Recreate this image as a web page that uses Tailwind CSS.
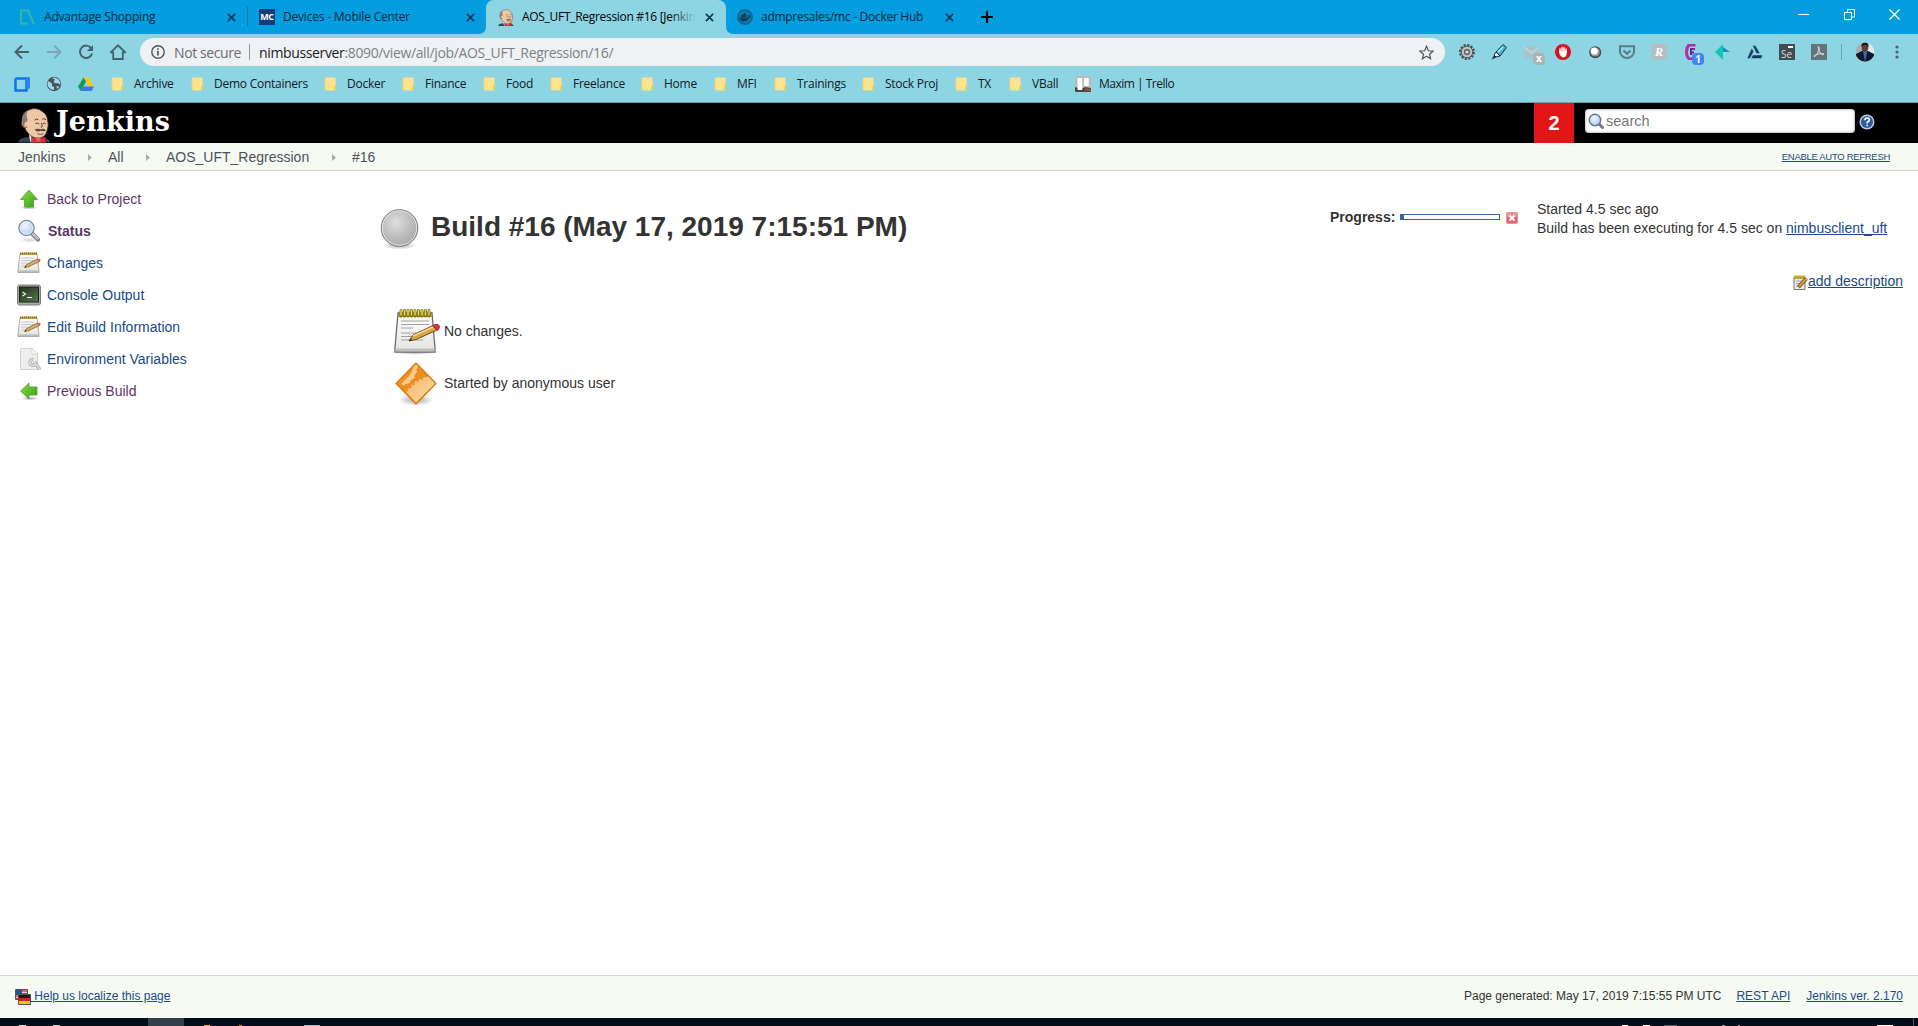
<!DOCTYPE html>
<html lang="en">
<head>
<meta charset="utf-8">
<title>AOS_UFT_Regression #16 [Jenkins]</title>
<script src="https://cdn.jsdelivr.net/npm/@tailwindcss/browser@4"></script>
</head>
<body class="w-[1918px] h-[1026px] overflow-hidden bg-white text-[#333] font-['Liberation_Sans',Arial,sans-serif]">
<svg class="absolute w-0 h-0">
  <defs>
    <linearGradient id="gGreen" x1="0" y1="0" x2="1" y2="1"><stop offset="0" stop-color="#8be04a"/><stop offset="1" stop-color="#3a9c14"/></linearGradient>
    <linearGradient id="gPaper" x1="0" y1="0" x2="0" y2="1"><stop offset="0" stop-color="#fff"/><stop offset="1" stop-color="#e4e4e2"/></linearGradient>
    <linearGradient id="gOrange" x1="0" y1="0" x2="1" y2="1"><stop offset="0" stop-color="#ee9a2c"/><stop offset="1" stop-color="#e8820e"/></linearGradient>
    <linearGradient id="gPeach" x1="0" y1="0" x2="1" y2="1"><stop offset="0" stop-color="#f8b868"/><stop offset="1" stop-color="#fcd9a8"/></linearGradient>
    <linearGradient id="gTerm" x1="0" y1="0" x2="1" y2="1"><stop offset="0" stop-color="#1f2f1c"/><stop offset="1" stop-color="#5a7650"/></linearGradient>
    <radialGradient id="gBall" cx=".4" cy=".35" r=".7"><stop offset="0" stop-color="#dedede"/><stop offset=".6" stop-color="#bcbcbc"/><stop offset="1" stop-color="#a8a8a8"/></radialGradient>
    <radialGradient id="gLens" cx=".4" cy=".35" r=".7"><stop offset="0" stop-color="#f2f8ff"/><stop offset="1" stop-color="#a9c8ee"/></radialGradient>
    <radialGradient id="gShade"><stop offset="0" stop-color="#000" stop-opacity=".35"/><stop offset="1" stop-color="#000" stop-opacity="0"/></radialGradient>
  </defs>
  <symbol id="folder" viewBox="0 0 14 16"><path d="M1 2.5Q1 1 2.500 1H11.500Q12.500 1 12.500 2.500V14Q12.500 15 11.500 15H2.500Q1 15 1 14Z" fill="#fde38c"/><path d="M1 2V14.500H3.500" fill="none" stroke="#e9cf7a"/><path d="M10.500 14.800L11.300 10L12.800 9V14Q12.500 15.300 10.500 14.800Z" fill="#f3c94f"/></symbol>
  <symbol id="close" viewBox="0 0 10 10"><path d="M1 1L9 9M9 1L1 9" stroke="#0c3a56" stroke-width="1.8" fill="none"/></symbol>
  <symbol id="butler" viewBox="0 0 34 36">
    <path d="M0 36Q1 32 7 31L15 30L26 31Q32 32 33 36Z" fill="#344352"/>
    <path d="M11 27L25 28V36H13Z" fill="#f2f2f2"/>
    <path d="M4 14Q4 5 11 2.500Q19 -1 25 4Q30 7 30.500 13Q32 18 30 24Q28 31 22 31.500Q15 32 11 27Q8 24 7 21Q3 20 4 14Z" fill="#eec8a4" stroke="#3a2a22" stroke-width=".8"/>
    <path d="M4 14Q4 6 10 3.500Q8 8 9.500 11Q10.500 14 8 15Q5 16 4.500 18Z" fill="#837e7a"/>
    <path d="M7 15Q5 16 6 20Q8 22 9.500 20" fill="#e3b48d" stroke="#4a352b" stroke-width=".7"/>
    <path d="M17 13Q19 11 21 12.500M25 12Q27 11 29 12.500M18 16.500Q20 15.500 22 17M25.500 16.500Q27 15.500 28.500 17M24 16Q26 20 23.500 20.500" fill="none" stroke="#4a352b" stroke-width="1"/>
    <path d="M17 23Q20 21 23.500 22.500Q27 21 29 23.500Q26 25 23.500 24Q20 26 17 23Z" fill="#59473b"/>
    <path d="M20 27Q23 28.500 26 27" fill="none" stroke="#8a3a30" stroke-width="1"/>
    <path d="M14 30L20 33L28 30L29 36H14Z" fill="#d5343c" stroke="#6d1418" stroke-width=".6"/><circle cx="21" cy="33" r="2.300" fill="#ef5a5c"/>
  </symbol>
  <symbol id="pad" viewBox="0 0 48 48">
    <ellipse cx="23" cy="44" rx="21" ry="3" fill="url(#gShade)"/>
    <path d="M6 5H40L43 40V44H3V40Z" fill="url(#gPaper)" stroke="#6a6a68" stroke-width="1.300"/>
    <path d="M3.500 40.500H42.500V43.500H3.500Z" fill="#bfbfbd"/>
    <path d="M6.500 6H39.500L40 9H6Z" fill="#a59520"/>
    <path d="M9 8V2.500M12.500 8V2.500M16 8V2.500M19.500 8V2.500M23 8V2.500M26.500 8V2.500M30 8V2.500M33.500 8V2.500M37 8V2.500" stroke="#7b6c10" stroke-width="3" stroke-linecap="round"/>
    <path d="M9 7V2.500M12.500 7V2.500M16 7V2.500M19.500 7V2.500M23 7V2.500M26.500 7V2.500M30 7V2.500M33.500 7V2.500M37 7V2.500" stroke="#e7d848" stroke-width="1.500" stroke-linecap="round"/>
    <path d="M9 13H37M9 16.500H37M9 20H21M9 25H30M9 28.500H26M9 32H31" stroke="#a0a0a0" stroke-width="1"/>
    <path d="M17 33L21 27L41 17.500L45 22L24 31.500Z" fill="#d9a548" stroke="#6e4b12" stroke-width="1"/>
    <path d="M21 28L41 19" stroke="#f4d48b" stroke-width="1.500"/>
    <path d="M41 17.500Q46 15 47.300 18Q48 21 45 22.500Z" fill="#df3b3b" stroke="#7c1a1a" stroke-width=".8"/>
    <path d="M17 33L18.500 30.500L20 32Z" fill="#222"/>
  </symbol>
  <symbol id="padsmall" viewBox="0 0 24 24">
    <path d="M3 3H20L22 20V21.500H1V20Z" fill="url(#gPaper)" stroke="#a4a4a0" stroke-width=".9"/>
    <path d="M1.500 20.200H21.500" stroke="#b8b8b4" stroke-width="1.500"/>
    <path d="M3 1.500H20V4H3Z" fill="#c3a94c"/><path d="M3 2.500H20" stroke="#8b7424" stroke-width="2" stroke-dasharray="1 1"/>
    <path d="M4 7H18M4 9.500H17M4 12H11M4 15H8" stroke="#c4c8cc" stroke-width="1"/>
    <path d="M7.500 16.500L9.500 13.500L20.500 8L22.500 10.500L11 16Z" fill="#d8a861" stroke="#7a5424" stroke-width=".7"/>
    <path d="M20 8.300Q22.500 7 23.500 8.500Q24 10 22 10.800Z" fill="#d4615a"/><path d="M7.500 16.500L8.500 15L9.500 16Z" fill="#222"/>
  </symbol>
  <symbol id="lens" viewBox="0 0 24 24">
    <ellipse cx="12" cy="21" rx="10" ry="2.500" fill="url(#gShade)" opacity=".5"/>
    <path d="M14.500 14L21 20.500" stroke="#7e8088" stroke-width="4.200" stroke-linecap="round"/><path d="M15 14.200L21.200 20.200" stroke="#c9c9cc" stroke-width="2"/>
    <circle cx="9.500" cy="9" r="7.600" fill="url(#gLens)" stroke="#7b8aa6" stroke-width="1.300"/><circle cx="9.500" cy="9" r="6.200" fill="none" stroke="#e6effa" stroke-width="1"/>
  </symbol>
</svg>

<div class="flex flex-col w-full h-full">
  <!-- Tab strip -->
  <div class="h-[34px] shrink-0 bg-[#049ddf] flex items-stretch text-[12px] text-[#06263a] font-['Open_Sans',sans-serif] whitespace-nowrap">
    <div class="w-[247px] flex items-center pl-[19px]">
      <svg class="w-[17px] h-[17px]" viewBox="0 0 17 17"><path d="M15 15.500L9 1.500H2V14.500H9" fill="none" stroke="#35b5a4" stroke-width="2"/></svg>
      <span class="ml-2 w-[183px] tracking-[-0.2px]">Advantage Shopping</span>
      <svg class="w-[9px] h-[9px]"><use href="#close"/></svg>
    </div>
    <div class="w-[239px] flex items-center">
      <div class="w-px h-[20px] bg-[#0a6f9f]"></div>
      <div class="ml-[11px] w-4 h-4 bg-[#123f7c] text-white text-[9px] font-bold leading-4 text-center tracking-[-0.4px] font-['Open_Sans',sans-serif]">MC</div>
      <span class="ml-2 w-[183px] tracking-[-0.2px]">Devices - Mobile Center</span>
      <svg class="w-[9px] h-[9px]"><use href="#close"/></svg>
    </div>
    <div class="relative w-[240px] bg-[#8ed5e4] rounded-t-lg flex items-center pl-[12px] text-black">
      <svg class="absolute -left-2 bottom-0 w-2 h-2" viewBox="0 0 8 8"><path d="M8 0V8H0Q8 8 8 0Z" fill="#8ed5e4"/></svg>
      <svg class="absolute -right-2 bottom-0 w-2 h-2" viewBox="0 0 8 8"><path d="M0 0V8H8Q0 8 0 0Z" fill="#8ed5e4"/></svg>
      <svg class="w-4 h-[17px]" preserveAspectRatio="none"><use href="#butler"/></svg>
      <div class="relative ml-2 w-[174px] overflow-hidden tracking-[-0.3px]">AOS_UFT_Regression #16 [Jenkins]
        <div class="absolute right-0 top-0 w-[26px] h-full bg-linear-to-r from-[#8ed5e4]/0 to-[#8ed5e4]"></div>
      </div>
      <svg class="ml-[9px] w-[9px] h-[9px]"><use href="#close"/></svg>
    </div>
    <div class="flex items-center pl-[11px]">
      <svg class="w-4 h-4" viewBox="0 0 16 16"><circle cx="8" cy="8" r="7.200" fill="#087cb0" stroke="#1c5878" stroke-width="1.300"/><path d="M2.500 8.500H11Q11 6.500 12 5.500Q13 6.500 12.500 7.500L14 7.800Q13 9 12 9Q10.500 12.500 6.500 12.500Q3 12.500 2.500 8.500ZM4 6H9.500V8H4ZM6.500 4H8.500V6H6.500Z" fill="#123e58"/></svg>
      <span class="ml-2 w-[184px] tracking-[-0.28px]">admpresales/mc - Docker Hub</span>
      <svg class="w-[9px] h-[9px]"><use href="#close"/></svg>
      <svg class="ml-[27px] w-3 h-3" viewBox="0 0 12 12"><path d="M6 0V12M0 6H12" stroke="#000" stroke-width="2"/></svg>
    </div>
    <div class="ml-auto mr-[18px] -mt-[6px] flex items-center">
      <svg class="w-[11px] h-[11px]" viewBox="0 0 11 11"><path d="M0 5.500H11" stroke="#fff"/></svg>
      <svg class="ml-[35px] w-[11px] h-[11px]" viewBox="0 0 11 11"><path d="M.5 3.500H7.500V10.500H.5ZM3.500 3V.5H10.500V8H8" fill="none" stroke="#fff"/></svg>
      <svg class="ml-[34px] w-[11px] h-[11px]" viewBox="0 0 11 11"><path d="M.5.5L10.500 10.500M10.500.5L.5 10.500" stroke="#fff" stroke-width="1.200"/></svg>
    </div>
  </div>

  <!-- Toolbar -->
  <div class="h-[36px] shrink-0 bg-[#8ed5e4] flex items-center pl-[14px] font-['Open_Sans',sans-serif]">
    <svg class="w-4 h-4" viewBox="0 0 16 16"><path d="M15 8H2M8 1.500L1.500 8L8 14.500" fill="none" stroke="#47616b" stroke-width="1.900"/></svg>
    <svg class="ml-4 w-4 h-4" viewBox="0 0 16 16"><path d="M1 8H14M8 1.500L14.500 8L8 14.500" fill="none" stroke="#76a9b6" stroke-width="1.900"/></svg>
    <svg class="ml-4 w-4 h-4" viewBox="0 0 16 16"><path d="M13.300 4.300A6.200 6.200 0 1 0 14.100 9.500" fill="none" stroke="#47616b" stroke-width="1.900"/><path d="M15 1V7H9Z" fill="#47616b"/></svg>
    <svg class="ml-4 w-4 h-4" viewBox="0 0 16 16"><path d="M.8 8.300L8 1.300L15.200 8.300H12.800V15H3.200V8.300Z" fill="none" stroke="#47616b" stroke-width="1.800"/></svg>
    <div class="ml-[14px] w-[1305px] h-7 rounded-full bg-[#f0f1f4] flex items-center pl-[11px] text-[14px] text-[#7d8185] whitespace-nowrap">
      <svg class="w-[14px] h-[14px]" viewBox="0 0 14 14"><circle cx="7" cy="7" r="6.200" fill="none" stroke="#505458" stroke-width="1.400"/><path d="M7 6V10.500M7 3.300V4.800" stroke="#505458" stroke-width="1.700"/></svg>
      <span class="ml-[9px] w-[75px] tracking-[-0.4px] text-[#6b6e72]">Not secure</span>
      <div class="w-px h-4 bg-[#90969a]"></div>
      <span class="ml-[9px] tracking-[-0.36px]"><span class="text-[#202124]">nimbusserver</span>:8090/view/all/job/AOS_UFT_Regression/16/</span>
      <svg class="ml-auto mr-[11px] w-[15px] h-[15px]" viewBox="0 0 24 24"><path d="M12 2L15 9.200L22.500 9.800L16.800 14.700L18.500 22L12 18.100L5.500 22L7.200 14.700L1.500 9.800L9 9.200Z" fill="none" stroke="#54595e" stroke-width="2"/></svg>
    </div>
    <div class="ml-[14px] flex items-center">
      <svg class="w-4 h-4" viewBox="0 0 16 16"><circle cx="8" cy="8" r="6.700" fill="none" stroke="#4d4d4d" stroke-width="2.600" stroke-dasharray="2.200 1.300"/><circle cx="8" cy="8" r="5.700" fill="#c6c8c8" stroke="#555" stroke-width="1"/><circle cx="8" cy="8" r="3.200" fill="#666"/><circle cx="8" cy="8" r="1.600" fill="#c9dfe5"/></svg>
      <svg class="ml-4 w-4 h-4" viewBox="0 0 16 16"><path d="M5 8L12 .5L15.500 3.500L9 12Z" fill="#40b8d6" stroke="#123847"/><path d="M7 8L12 3" stroke="#b8edf6" stroke-width="1.500"/><path d="M5 8L9 12L5 13L3 11Z" fill="#e8f5f8" stroke="#222"/><path d="M3 11.500L5 13.500L.5 15.500Z" fill="#123"/></svg>
      <div class="relative ml-[17px] w-[20px] h-4">
        <svg class="w-[15px] h-4" viewBox="0 0 15 16"><path d="M0 2H15V14H0Z" fill="#a9c3c9"/><path d="M0 3L7.500 9L15 3" fill="none" stroke="#c2d8dc" stroke-width="1.500"/></svg>
        <div class="absolute left-[9px] top-[9px] w-3 h-3 rounded-sm bg-[#aab3b5] text-white text-[10px] font-bold leading-[11px] text-center">x</div>
      </div>
      <svg class="ml-[11px] w-4 h-4" viewBox="0 0 16 16"><circle cx="8" cy="8" r="8" fill="#d9101b"/><path d="M5 8V5M7 7V3.500M9 7V3.500M11 9V5" stroke="#fff" stroke-width="1.500" stroke-linecap="round"/><path d="M4.300 7H11.700V10Q11 13.500 8 13.500Q5.500 13 4.300 9.500Z" fill="#fff"/></svg>
      <svg class="ml-4 w-4 h-4" viewBox="0 0 16 16"><circle cx="8.200" cy="8.300" r="6" fill="#45494c"/><circle cx="8.200" cy="8" r="4.600" fill="#9b9fa1"/><circle cx="7.200" cy="7" r="3.600" fill="#fff"/></svg>
      <svg class="ml-4 w-4 h-4" viewBox="0 0 16 16"><path d="M1 2.200H15V7.500A7 6.500 0 0 1 1 7.500Z" fill="none" stroke="#587d86" stroke-width="2"/><path d="M4.500 6.500L8 9.700L11.500 6.500" fill="none" stroke="#587d86" stroke-width="2.200"/></svg>
      <div class="ml-4 w-4 h-4 rounded-sm bg-[#b5bfc0] text-white text-[12px] italic font-bold leading-4 text-center font-['Liberation_Serif',serif]">R</div>
      <div class="relative ml-4 w-5 h-4">
        <svg class="ml-[2px] w-3 h-4" viewBox="0 0 12 16"><path d="M10.500 1H4Q1.500 3 1.500 8Q1.500 13 5 15.500L9 14" fill="none" stroke="#b0309e" stroke-width="3"/><path d="M5 5H10M6 4V11M5 8.500H9" stroke="#6f2496" stroke-width="2"/></svg>
        <div class="absolute left-[9px] top-[9px] w-3 h-3 rounded-sm bg-[#4286f5] text-white text-[10px] font-bold leading-3 text-center">1</div>
      </div>
      <svg class="ml-3 w-[15px] h-4" viewBox="0 0 15 16"><path d="M0 8L8 0V16Z" fill="#14c5b2"/><path d="M8 3L15 8H8Z" fill="#1c8fc6"/></svg>
      <svg class="ml-[17px] w-4 h-4" viewBox="0 0 16 16"><path d="M5.500 1.500H8.500L13 9.500H9.500ZM4.800 4L6.700 7.500L3 14.500H0L2.500 9ZM5.800 11H15.500L14.500 14.500H4Z" fill="#123a60" stroke="#8ed5e4" stroke-width=".5"/></svg>
      <div class="relative ml-4 w-4 h-4 bg-[#424b4e] text-[#d8dee0] text-[10px] leading-[21px] pl-[2px]">Se<div class="absolute right-[2px] top-[2px] w-[5px] h-[2px] bg-white"></div></div>
      <svg class="ml-4 w-4 h-4" viewBox="0 0 16 16"><path d="M0 0H16V16H0Z" fill="#64757a"/><path d="M7 2.500Q9 2.500 8 6Q6.500 10 4 12.500Q2.500 13 3.500 11.500Q6 9.500 12.500 9.500Q13.500 11 11.500 11Q7.500 8.500 7 2.500Z" fill="none" stroke="#d7e0e2" stroke-width="1"/></svg>
      <div class="ml-[14px] w-px h-4 bg-[#6fa4b1]"></div>
      <svg class="ml-[13px] w-5 h-5" viewBox="0 0 20 20"><clipPath id="av"><circle cx="10" cy="10" r="9.500"/></clipPath><g clip-path="url(#av)"><path d="M0 0H20V20H0Z" fill="#a5b3b0"/><path d="M12 0H20V12H12Z" fill="#e4e9e8"/><path d="M1 20V12L7 9H13L19 12V20Z" fill="#10182a"/><path d="M8 9L10 20L12.500 9Z" fill="#2f6fb4"/><ellipse cx="10" cy="5.500" rx="3.300" ry="4.300" fill="#5d4036"/><path d="M6.500 5Q6 .5 10 .5Q14 .5 13.500 5Q12 2.500 10 2.500Q8 2.500 6.500 5Z" fill="#1b1412"/></g></svg>
      <svg class="ml-[20px] w-1 h-4" viewBox="0 0 4 16"><g fill="#49626b"><circle cx="2" cy="3" r="1.600"/><circle cx="2" cy="8" r="1.600"/><circle cx="2" cy="13" r="1.600"/></g></svg>
    </div>
  </div>

  <!-- Bookmarks -->
  <div class="h-[33px] shrink-0 bg-[#8ed5e4] border-b border-[#6d9ea9] flex items-center pb-[4px] pl-[14px] text-[12px] text-[#0e1a1e] font-['Open_Sans',sans-serif] tracking-[-0.25px] whitespace-nowrap">
    <svg class="w-4 h-4" viewBox="0 0 16 16"><path d="M1.500 2.500H14.500V12.500M1.500 2.500V14.500H12.500V2.500" fill="none" stroke="#1272ec" stroke-width="2.500"/><path d="M12.500 1.500H14.500V12.500H12.500Z" fill="#2d8af8"/></svg>
    <svg class="ml-4 w-4 h-4" viewBox="0 0 16 16"><circle cx="8" cy="8" r="7.200" fill="#4b565b"/><path d="M2 5L6 7.500V10L8 11V14Q3 13.500 1.500 9ZM6 2L9 3.500L7.500 6L10 7.500L12 7L14.500 9Q14 5 12.500 3.500L9 1.500ZM10.500 10L13.500 10.500L11 13Z" fill="#a0d9e5"/></svg>
    <svg class="ml-4 w-4 h-4" viewBox="0 0 16 16"><path d="M5.500 1.500H10.500L16 10.500H10.500Z" fill="#fbc912"/><path d="M5.500 1.500L8 5.700L2.700 15L0 10.500Z" fill="#159a5b"/><path d="M5.200 10.500H16L13.500 15H2.700Z" fill="#3f78e0"/></svg>
    <div class="ml-[17px] flex">
      <div class="w-[80px] flex items-center"><svg class="w-[13px] h-4 mr-[10px]"><use href="#folder"/></svg>Archive</div>
      <div class="w-[133px] flex items-center"><svg class="w-[13px] h-4 mr-[10px]"><use href="#folder"/></svg>Demo Containers</div>
      <div class="w-[78px] flex items-center"><svg class="w-[13px] h-4 mr-[10px]"><use href="#folder"/></svg>Docker</div>
      <div class="w-[81px] flex items-center"><svg class="w-[13px] h-4 mr-[10px]"><use href="#folder"/></svg>Finance</div>
      <div class="w-[67px] flex items-center"><svg class="w-[13px] h-4 mr-[10px]"><use href="#folder"/></svg>Food</div>
      <div class="w-[91px] flex items-center"><svg class="w-[13px] h-4 mr-[10px]"><use href="#folder"/></svg>Freelance</div>
      <div class="w-[73px] flex items-center"><svg class="w-[13px] h-4 mr-[10px]"><use href="#folder"/></svg>Home</div>
      <div class="w-[60px] flex items-center"><svg class="w-[13px] h-4 mr-[10px]"><use href="#folder"/></svg>MFI</div>
      <div class="w-[88px] flex items-center"><svg class="w-[13px] h-4 mr-[10px]"><use href="#folder"/></svg>Trainings</div>
      <div class="w-[93px] flex items-center"><svg class="w-[13px] h-4 mr-[10px]"><use href="#folder"/></svg>Stock Proj</div>
      <div class="w-[54px] flex items-center"><svg class="w-[13px] h-4 mr-[10px]"><use href="#folder"/></svg>TX</div>
      <div class="w-[66px] flex items-center"><svg class="w-[13px] h-4 mr-[10px]"><use href="#folder"/></svg>VBall</div>
      <div class="flex items-center tracking-[-0.5px]"><svg class="w-4 h-4 mr-2" viewBox="0 0 16 16"><rect width="16" height="16" rx="1.500" fill="#b9bcbc"/><path d="M0 11L6 13L10 11L16 12V15Q16 16 15 16H1Q0 16 0 15Z" fill="#4b4541"/><path d="M10 12L16 13V15H10Z" fill="#8d5148"/><rect x="2.500" y="2" width="4.800" height="12" rx=".8" fill="#fff"/><rect x="9" y="2" width="4.800" height="8" rx=".8" fill="#fff"/></svg>Maxim | Trello</div>
    </div>
  </div>

  <!-- Jenkins header -->
  <div class="h-[40px] shrink-0 bg-black flex items-center text-white">
    <svg class="ml-[18px] mt-1 w-[33px] h-9"><use href="#butler"/></svg>
    <div class="ml-[5px] -mt-[3px] w-[120px] text-[27px] leading-[36px] font-bold tracking-[0.1px] font-['DejaVu_Serif',Georgia,serif]">Jenkins</div>
    <div class="ml-auto w-[40px] h-full bg-[#e21617] text-[20px] font-bold text-center leading-[40px]">2</div>
    <div class="ml-[11px] -mt-1 w-[270px] h-6 rounded bg-white shadow-[inset_0_0_3px_#888] flex items-center pl-[3px] text-[14.5px] text-[#757575]">
      <svg class="w-4 h-4" viewBox="0 0 16 16"><path d="M10.500 10.500L14.500 14.500" stroke="#777" stroke-width="3" stroke-linecap="round"/><circle cx="7" cy="7" r="5.700" fill="url(#gLens)" stroke="#65789c" stroke-width="1.500"/></svg>
      <span class="ml-[2px] pt-[2px]">search</span>
    </div>
    <svg class="ml-[4px] mr-[43px] w-4 h-4 -mt-[2px]" viewBox="0 0 16 16"><circle cx="8" cy="8" r="7.500" fill="#b7cce8"/><circle cx="8" cy="8" r="6" fill="#2f5b9e"/><path d="M5.800 6.200Q6 4 8.200 4Q10.400 4.200 10.300 6Q10 7.500 8.200 8.300V9.500M8.200 10.800V12.300" fill="none" stroke="#fff" stroke-width="1.600"/></svg>
  </div>

  <!-- Breadcrumbs -->
  <div class="h-[28px] shrink-0 bg-[#f6faf2] border-b border-[#d3d7cf] flex items-center pt-[2px] pl-[18px] pr-[28px] text-[14px] text-[#4d545d]">
    <span class="w-[70px]">Jenkins</span>
    <svg class="w-1 h-[7px]" viewBox="0 0 4 7"><path d="M0 0L4 3.500L0 7Z" fill="#aaa"/></svg>
    <span class="ml-4 w-[38px]">All</span>
    <svg class="w-1 h-[7px]" viewBox="0 0 4 7"><path d="M0 0L4 3.500L0 7Z" fill="#aaa"/></svg>
    <span class="ml-4 w-[166px]">AOS_UFT_Regression</span>
    <svg class="w-1 h-[7px]" viewBox="0 0 4 7"><path d="M0 0L4 3.500L0 7Z" fill="#aaa"/></svg>
    <span class="ml-4">#16</span>
    <a class="ml-auto text-[9.500px] tracking-[-0.3px] underline text-[#204a87]">ENABLE AUTO REFRESH</a>
  </div>

  <!-- Main -->
  <div class="flex-1 min-h-0 flex">
    <nav class="w-[380px] shrink-0 pt-[12px] pl-[17px] text-[14px] text-[#204a87]">
      <div class="h-8 flex items-center gap-[6px] text-[#5c3566]"><svg class="w-6 h-6" viewBox="0 0 24 24"><ellipse cx="12" cy="20.500" rx="9" ry="2" fill="url(#gShade)"/><path d="M12 3L20.500 12.500H16.500V20H7.500V12.500H3.500Z" fill="url(#gGreen)" stroke="#4da628" stroke-width=".8"/></svg>Back to Project</div>
      <div class="h-8 flex items-center gap-[7px] text-[#5c3566] font-bold"><svg class="w-6 h-6"><use href="#lens"/></svg>Status</div>
      <div class="h-8 flex items-center gap-[6px]"><svg class="w-6 h-6"><use href="#padsmall"/></svg>Changes</div>
      <div class="h-8 flex items-center gap-[6px]"><svg class="w-6 h-6" viewBox="0 0 24 24"><rect x=".5" y="2" width="23" height="20" rx="2" fill="#a9aaa5" stroke="#7d7e7a"/><rect x="2.500" y="4" width="19" height="15" fill="url(#gTerm)" stroke="#1a2218"/><path d="M5.500 9L8.500 11L5.500 13M10 14.500H15" fill="none" stroke="#e8f5df" stroke-width="1.200"/></svg>Console Output</div>
      <div class="h-8 flex items-center gap-[6px]"><svg class="w-6 h-6"><use href="#padsmall"/></svg>Edit Build Information</div>
      <div class="h-8 flex items-center gap-[6px]"><svg class="w-6 h-6" viewBox="0 0 24 24"><path d="M3.500 1.500H15L20.500 7V22.500H3.500Z" fill="#eeeeec" stroke="#d0d0ce"/><path d="M15 1.500V7H20.500Z" fill="#fafafa" stroke="#d0d0ce" stroke-width=".8"/><path d="M17.500 15L23 22.500" stroke="#a9a9a7" stroke-width="3"/><path d="M17.500 15L23 22.500" stroke="#dededc" stroke-width="1.500"/><path d="M16.500 12.500A3 3 0 1 0 18.500 17" fill="none" stroke="#a9a9a7" stroke-width="3"/><path d="M16.500 12.500A3 3 0 1 0 18.500 17" fill="none" stroke="#e2e2e0" stroke-width="1.500"/></svg>Environment Variables</div>
      <div class="h-8 flex items-center gap-[6px] text-[#5c3566]"><svg class="w-6 h-6" viewBox="0 0 24 24"><ellipse cx="13" cy="19.500" rx="9" ry="2" fill="url(#gShade)"/><path d="M3.500 12L12 4V8H20V16H12V20Z" fill="url(#gGreen)" stroke="#4da628" stroke-width=".8"/></svg>Previous Build</div>
    </nav>

    <main class="flex-1 flex flex-col text-[14px]">
      <div class="h-[89px] flex">
        <svg class="mt-[36px] w-[39px] h-[44px]" viewBox="0 0 39 44"><ellipse cx="19.500" cy="38.500" rx="17" ry="4" fill="url(#gShade)"/><circle cx="19.500" cy="21" r="18.300" fill="url(#gBall)" stroke="#777" stroke-width="1"/><circle cx="19.500" cy="21" r="17.200" fill="none" stroke="#e2e2e2" stroke-width="1"/></svg>
        <h1 class="ml-[12px] mt-[38px] text-[28px] leading-9 font-bold whitespace-nowrap">Build #16 (May 17, 2019 7:15:51 PM)</h1>
        <div class="ml-auto mr-[31px] flex">
          <span class="mt-[36px] w-[70px] leading-5 font-bold">Progress:</span>
          <div class="mt-[43px] w-[100px] h-[6px] border border-[#3465a4] bg-white"><div class="w-[3px] h-full bg-[#3465a4]"></div></div>
          <svg class="mt-[41px] ml-[6px] w-3 h-3" viewBox="0 0 12 12"><rect x=".5" y=".5" width="11" height="11" rx="1" fill="#e0666b" stroke="#e39a9d"/><path d="M1 1H11V5H1Z" fill="#ec9396"/><path d="M3.500 3.500L8.500 8.500M8.500 3.500L3.500 8.500" stroke="#fff" stroke-width="1.800"/></svg>
          <div class="ml-[19px] mt-[29px] w-[350px] leading-[19px] whitespace-nowrap">Started 4.5 sec ago<br>Build has been executing for 4.5 sec on <a class="underline text-[#204a87]">nimbusclient_uft</a></div>
        </div>
      </div>
      <div class="h-[44px] flex items-end justify-end pr-[15px]"><div class="flex items-center leading-[22px] -translate-y-[12px]"><svg class="w-[15px] h-[15px] mt-[2px]" viewBox="0 0 15 15"><path d="M1 2H12V14.500H1Z" fill="#eceae4" stroke="#777468"/><path d="M1 2.200H12" stroke="#9b861a" stroke-width="3"/><path d="M1.500 1.800H12" stroke="#f0dc3c" stroke-width="2" stroke-dasharray="1 1"/><path d="M3 6H9M3 8.500H8M3 11H6" stroke="#aaa"/><path d="M5.500 12L13.500 3.500" stroke="#5d3e10" stroke-width="3.600"/><path d="M6 11.500L13.500 3.500" stroke="#dfa73e" stroke-width="2"/></svg><a class="underline text-[#204a87]">add description</a></div></div>
      <div class="pl-[12px] pt-px">
        <div class="h-[52px] flex items-center"><svg class="w-[48px] h-[48px] mr-[4px] mt-[2px]"><use href="#pad"/></svg>No changes.</div>
        <div class="h-[52px] flex items-center"><svg class="w-[48px] h-[48px] mr-[4px]" viewBox="0 0 48 48"><ellipse cx="24" cy="41" rx="18" ry="6" fill="url(#gShade)"/><path d="M24 4L44 24.500L24 45L4 24.500Z" fill="url(#gOrange)" stroke="#dc7a10" stroke-width="1.200" stroke-linejoin="round"/><path d="M9 25L15 19Q20 15 21 8.500L24 5.500L26 7.500L24 11L25.500 12L22 17L23 18.500L18 22L18 24L13 25L12.500 27Z" fill="url(#gPeach)"/><path d="M43 24.500L24 43.500L14 33L16 32L15.500 29L19.500 29.500L19 25.500L22.500 26L23 22L26 23L27.500 19.500L30 21L32 17.500L34 19L35.500 17Z" fill="url(#gPeach)"/></svg>Started by anonymous user</div>
      </div>
    </main>
  </div>

  <!-- Footer -->
  <footer class="h-[43px] shrink-0 bg-[#f6faf2] border-t border-[#d3d7cf] flex items-center px-[15px] pb-[3px] text-[12px]">
    <svg class="mt-[2px] w-4 h-4" viewBox="0 0 16 16"><path d="M.5.5H12.500V10.500H.5Z" fill="#fff" stroke="#555"/><path d="M1 2H12M1 4.500H12M1 7H12M1 9.500H12" stroke="#cf3c3c" stroke-width="1.300"/><path d="M1 1H7V6H1Z" fill="#2e4f94"/><path d="M3.500 5.500H15.500V15.500H3.500Z" fill="#191919" stroke="#555"/><path d="M4 9H15V12H4Z" fill="#d42222"/><path d="M4 12H15V15H4Z" fill="#f2c318"/></svg>
    <a class="underline text-[#204a87] whitespace-pre"> Help us localize this page</a>
    <span class="ml-auto">Page generated: May 17, 2019 7:15:55 PM UTC</span>
    <a class="ml-[15px] underline text-[#204a87]">REST API</a>
    <a class="ml-4 underline text-[#204a87]">Jenkins ver. 2.170</a>
  </footer>

  <!-- Taskbar -->
  <div class="h-2 shrink-0 bg-[#020d18] flex items-end">
    <div class="ml-[19px] w-[7px] h-px bg-[#cfd5da]"></div>
    <div class="ml-[27px] w-[7px] h-px bg-[#cfd5da]"></div>
    <div class="ml-[88px] w-[36px] h-2 bg-[#323f4a]"></div>
    <div class="ml-[20px] w-[6px] h-px bg-[#e8b52e]"></div>
    <div class="ml-[29px] w-[3px] h-px bg-[#d8892a]"></div>
    <div class="ml-[62px] w-[16px] h-px bg-[#aebbc8]"></div>
    <div class="ml-auto w-[6px] h-px bg-white"></div>
    <div class="ml-[15px] w-[7px] h-px bg-white"></div>
    <div class="ml-[14px] w-[13px] h-px bg-[#59636c]"></div>
    <div class="ml-[45px] w-[3px] h-px bg-[#9aa1a7]"></div>
    <div class="ml-[13px] w-[2px] h-px bg-[#9aa1a7]"></div>
    <div class="ml-[137px] w-[16px] h-px bg-white"></div>
    <div class="ml-[20px] mr-[4px] w-px h-2 bg-[#4b545c]"></div>
  </div>
</div>
</body>
</html>
